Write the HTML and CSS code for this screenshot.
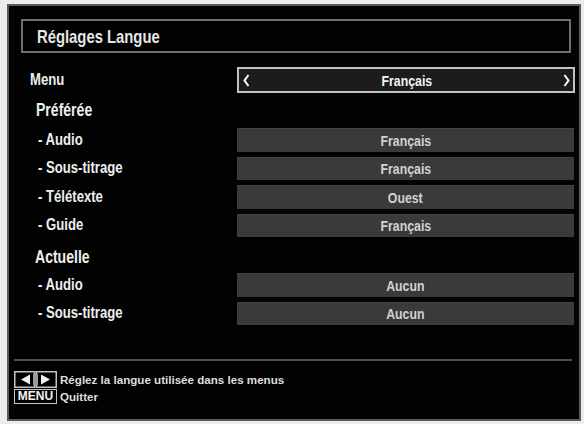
FILE: index.html
```html
<!DOCTYPE html>
<html lang="fr">
<head>
<meta charset="utf-8">
<title>Réglages Langue</title>
<link rel="stylesheet" href="styles.css">
</head>
<body>
<div class="panel">
  <div class="title"><span class="t tl">Réglages Langue</span></div>
  <div class="rows">
    <div class="row row-menu">
      <span class="label"><span class="t">Menu</span></span>
      <div class="selector">
        <svg class="chev" width="7" height="13" viewBox="0 0 7 13"><polyline points="5.5,1 1.5,6.5 5.5,12" fill="none" stroke="#fff" stroke-width="2"/></svg>
        <span class="sel-text"><span class="t c">Français</span></span>
        <svg class="chev" width="7" height="13" viewBox="0 0 7 13"><polyline points="1.5,1 5.5,6.5 1.5,12" fill="none" stroke="#fff" stroke-width="2"/></svg>
      </div>
    </div>
    <div class="section first"><span class="t tl">Préférée</span></div>
    <div class="row"><span class="label sub"><span class="t">- Audio</span></span><div class="bar"><span class="t c">Français</span></div></div>
    <div class="row"><span class="label sub"><span class="t">- Sous-titrage</span></span><div class="bar"><span class="t c">Français</span></div></div>
    <div class="row"><span class="label sub"><span class="t">- Télétexte</span></span><div class="bar"><span class="t c">Ouest</span></div></div>
    <div class="row"><span class="label sub"><span class="t">- Guide</span></span><div class="bar"><span class="t c">Français</span></div></div>
    <div class="section second"><span class="t tl">Actuelle</span></div>
    <div class="row"><span class="label sub"><span class="t">- Audio</span></span><div class="bar"><span class="t c">Aucun</span></div></div>
    <div class="row"><span class="label sub"><span class="t">- Sous-titrage</span></span><div class="bar"><span class="t c">Aucun</span></div></div>
  </div>
  <div class="footer">
    <div class="separator"></div>
    <div class="hints">
      <div class="hint">
        <svg class="keys" width="43" height="17" viewBox="0 0 43 17">
          <rect x="0.75" y="0.75" width="20" height="15.5" fill="#000" stroke="#c4c4c4" stroke-width="1.5"/>
          <rect x="22.25" y="0.75" width="20" height="15.5" fill="#000" stroke="#c4c4c4" stroke-width="1.5"/>
          <polygon points="7,8.5 16,3.5 16,13.5" fill="#f2f2f2"/>
          <polygon points="36,8.5 27,3.5 27,13.5" fill="#f2f2f2"/>
          <rect x="19" y="2.5" width="5" height="12" fill="#9a9a9a"/>
        </svg>
        <span class="hint-text">Réglez la langue utilisée dans les menus</span>
      </div>
      <div class="hint">
        <span class="menu-key">MENU</span>
        <span class="hint-text">Quitter</span>
      </div>
    </div>
  </div>
</div>
</body>
</html>
```

FILE: styles.css
```css
html, body {
  margin: 0;
  padding: 0;
}
body {
  background: #ececec;
  width: 584px;
  height: 424px;
  overflow: hidden;
  font-family: "Liberation Sans", Arial, sans-serif;
  font-weight: bold;
  color: #ececec;
}
/* emulate the narrow TV OSD typeface */
.t {
  display: inline-block;
  white-space: nowrap;
  transform: scaleX(0.82);
  transform-origin: 0 50%;
}
.t.tl {
  transform: scaleX(0.78);
}
.t.c {
  transform-origin: 50% 50%;
}
.panel {
  margin: 4px 0 0 7px;
  width: 570px;
  height: 413px;
  border: 2px solid #5a5a5a;
  background: #020202;
  display: flex;
  flex-direction: column;
}
.title {
  margin: 13px 8px 0 12px;
  height: 30px;
  border: 2px solid #6e6e6e;
  padding-left: 14px;
  font-size: 19px;
  line-height: 31px;
  color: #e6e6e6;
}
.rows {
  display: flex;
  flex-direction: column;
  padding: 0 4px 0 21px;
}
.row {
  display: flex;
  align-items: center;
  height: 23.5px;
  margin-bottom: 5px;
}
.row-menu {
  margin-top: 14px;
  height: 26px;
  margin-bottom: 0;
}
.label {
  width: 207px;
  flex: none;
  font-size: 16px;
  color: #eeeeee;
}
.label.sub {
  padding-left: 8px;
  box-sizing: border-box;
}
.selector {
  flex: 1;
  height: 26px;
  box-sizing: border-box;
  border: 2px solid #c2c2c2;
  background: #1c1c1c;
  display: flex;
  align-items: center;
  justify-content: space-between;
  padding: 0 3px 0 4px;
}
.sel-text {
  font-size: 15px;
  color: #f4f4f4;
}
.chev {
  display: block;
}
.bar {
  flex: 1;
  height: 100%;
  margin-right: 1px;
  background: #3a3a3a;
  border-top: 1px solid #444;
  box-sizing: border-box;
  display: flex;
  align-items: center;
  justify-content: center;
  font-size: 15px;
  color: #d2d2d2;
}
.section {
  display: flex;
  align-items: center;
  padding-left: 6px;
  font-size: 18px;
  color: #eeeeee;
}
.section.first {
  height: 35px;
}
.section.second {
  height: 31px;
  padding-left: 5px;
}
.footer {
  margin-top: auto;
}
.separator {
  margin: 0 7px 0 5px;
  height: 2px;
  background: #4e4e4e;
}
.hints {
  display: flex;
  flex-direction: column;
  gap: 1px;
  padding: 10px 0 15px 5px;
}
.hint {
  display: flex;
  align-items: center;
  gap: 3px;
  height: 17px;
}
.hint + .hint {
  height: 15px;
}
.keys {
  display: block;
  flex: none;
}
.menu-key {
  width: 43px;
  height: 15px;
  box-sizing: border-box;
  border: 1.5px solid #c4c4c4;
  font-size: 12px;
  line-height: 12px;
  text-align: center;
  color: #f4f4f4;
}
.hint-text {
  font-size: 11.6px;
  color: #dedede;
}
```
